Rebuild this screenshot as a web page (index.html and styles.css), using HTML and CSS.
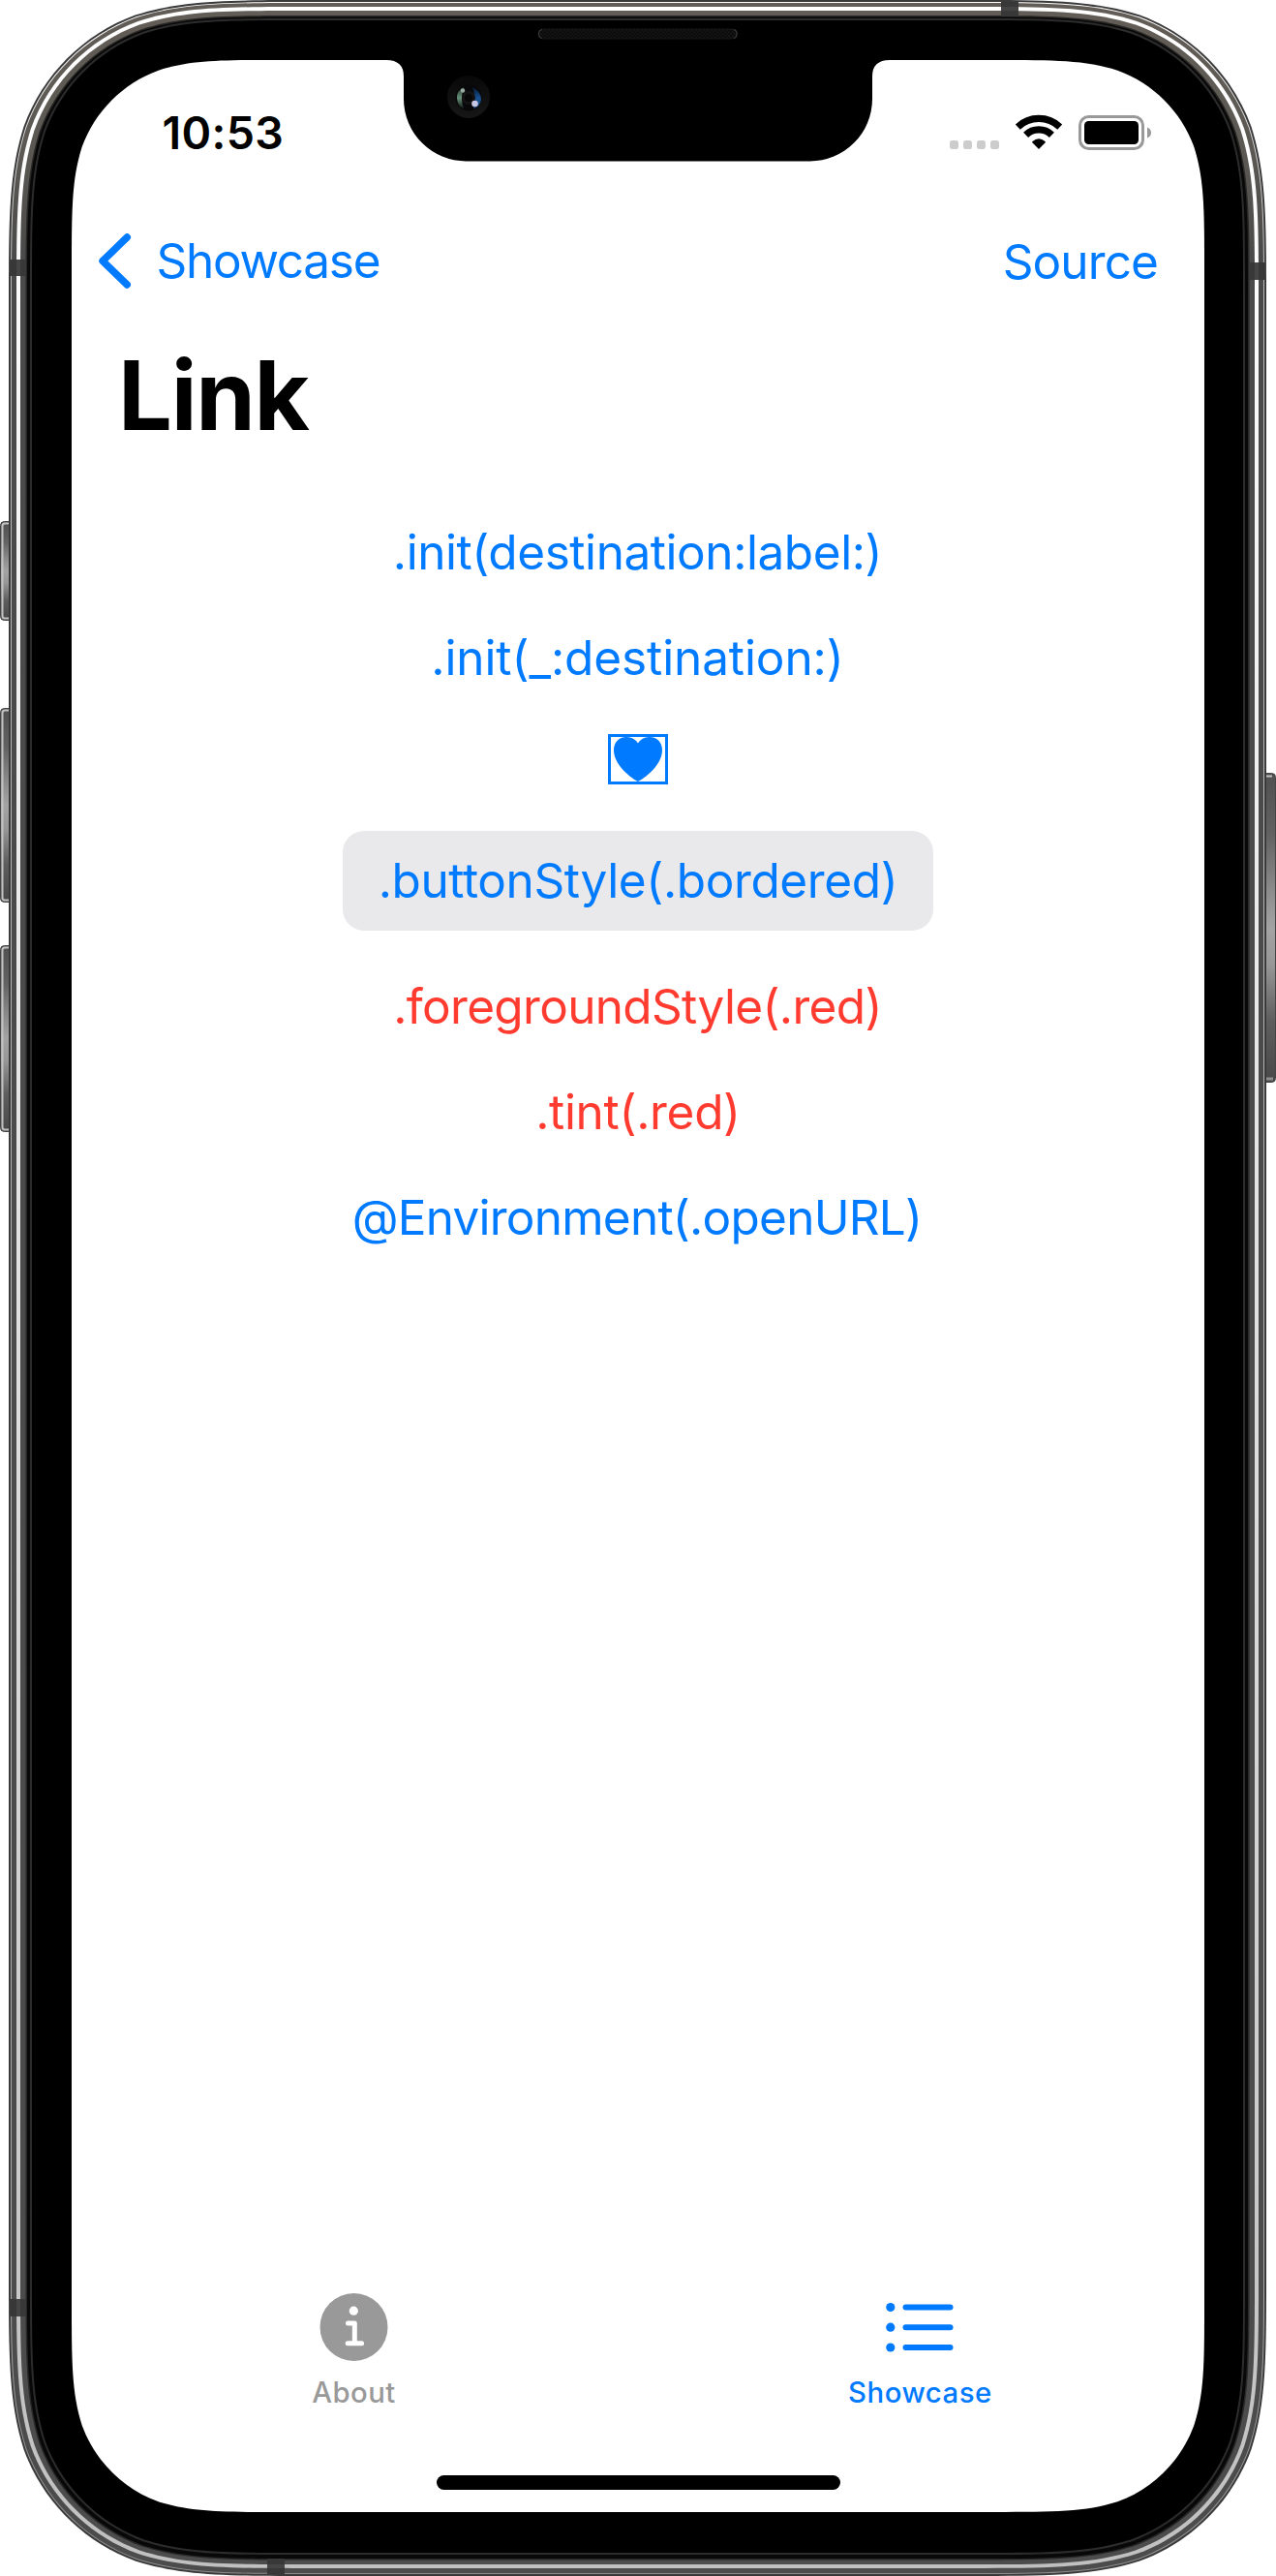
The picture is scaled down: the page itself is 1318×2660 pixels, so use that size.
FILE: index.html
```html
<!DOCTYPE html>
<html lang="en">
<head>
<meta charset="utf-8">
<title>Link</title>
<link rel="stylesheet" href="styles.css">
</head>
<body>
<div class="phone">
  <svg class="frame" viewBox="0 0 1318 2660" aria-hidden="true">
    <defs>
      <linearGradient id="steel" gradientUnits="userSpaceOnUse" x1="0" y1="0" x2="0" y2="2660">
        <stop offset="0" stop-color="#625d56"/><stop offset=".06" stop-color="#5b5853"/><stop offset=".1" stop-color="#4a4a4a"/><stop offset="1" stop-color="#4c4c4c"/>
      </linearGradient>
      <linearGradient id="shine" gradientUnits="userSpaceOnUse" x1="0" y1="0" x2="0" y2="2660">
        <stop offset="0" stop-color="#fff"/><stop offset=".12" stop-color="#fafafa"/><stop offset="1" stop-color="#c0c0c0"/>
      </linearGradient>
      <linearGradient id="edge" gradientUnits="userSpaceOnUse" x1="0" y1="0" x2="0" y2="2660">
        <stop offset="0" stop-color="#fff"/><stop offset=".1" stop-color="#bcbcbc"/><stop offset=".9" stop-color="#a8a8a8"/><stop offset="1" stop-color="#8c8c8c"/>
      </linearGradient>
      <linearGradient id="key" x1="0" y1="0" x2="0" y2="1">
        <stop offset="0" stop-color="#505050"/><stop offset=".2" stop-color="#626262"/><stop offset=".38" stop-color="#8c8c8c"/><stop offset=".5" stop-color="#a3a3a3"/><stop offset=".62" stop-color="#979797"/><stop offset=".8" stop-color="#5e5e5e"/><stop offset="1" stop-color="#484848"/>
      </linearGradient>
      <linearGradient id="lensRing" x1="0" y1="0" x2="0" y2="1">
        <stop offset="0" stop-color="#080808"/><stop offset="1" stop-color="#171717"/>
      </linearGradient>
      <linearGradient id="lensGreen" x1="0" y1="0" x2="0" y2="1">
        <stop offset="0" stop-color="#26352d"/><stop offset=".5" stop-color="#679079"/><stop offset="1" stop-color="#111a15"/>
      </linearGradient>
      <linearGradient id="lensBlue" x1="0" y1="0" x2="0" y2="1">
        <stop offset="0" stop-color="#06162c"/><stop offset=".5" stop-color="#17508f"/><stop offset="1" stop-color="#1c4a82"/>
      </linearGradient>
      <pattern id="mesh" width="4" height="4" patternUnits="userSpaceOnUse">
        <rect width="4" height="4" fill="#0c0c0c"/><rect width="2" height="2" fill="#131313"/><rect x="2" y="2" width="2" height="2" fill="#131313"/>
      </pattern>
    </defs>

    <g class="keys">
      <rect x=".5" y="538.5" width="16" height="102" rx="4" fill="url(#key)" stroke="#454545"/>
      <path d="M9 540.5H5Q2.5 540.5 2.5 543V636Q2.5 638.5 5 638.5H9" fill="none" stroke="#c4c2c2" stroke-width="2"/>
      <rect x=".5" y="731.5" width="16" height="200" rx="4" fill="url(#key)" stroke="#454545"/>
      <path d="M9 733.5H5Q2.5 733.5 2.5 736V927Q2.5 929.5 5 929.5H9" fill="none" stroke="#c4c2c2" stroke-width="2"/>
      <rect x=".5" y="976.5" width="16" height="192" rx="4" fill="url(#key)" stroke="#454545"/>
      <path d="M9 978.5H5Q2.5 978.5 2.5 981V1164Q2.5 1166.5 5 1166.5H9" fill="none" stroke="#c4c2c2" stroke-width="2"/>
      <rect x="1300" y="798.5" width="17.500" height="319" rx="4" fill="url(#key)" stroke="#454545"/>
      <path d="M1308 801.500H1314" stroke="#c4c2c2" stroke-width="2"/>
      <path d="M1308 1114H1315" stroke="#8e8e8e" stroke-width="3"/>
    </g>

    <g id="shell"></g>

    <g fill="#454545">
      <path fill="#383838" d="M10 268h17v17H10zM10 2374h17v18H10zM1290 271h16v18h-16zM1034 2h18v15h-18zM276 2642h18v16h-18z"/>
      <path d="M17 268h4v17h-4zM17 2374h4v18h-4zM1296 271h4v18h-4zM1034 7h18v4h-18zM276 2648h18v4h-18z"/>
    </g>

    <path d="M399 61H919V62Q901 62 901 79V102A64.500 64.500 0 0 1 836.500 166.500H481.500A64.500 64.500 0 0 1 417 102V79Q417 62 399 62Z"/>
    <rect x="556" y="30" width="205.500" height="10" rx="5" fill="url(#mesh)" stroke="#161616"/>
    <path d="M560 30.500Q556.500 31 556.500 35T560 39.500M757.500 30.500Q761 31 761 35T757.500 39.500" fill="none" stroke="#383838" stroke-width="1.200"/>
    <circle cx="484" cy="100" r="22" fill="url(#lensRing)"/>
    <circle cx="484" cy="101" r="13.500" fill="#08080a"/>
    <path d="M479 90Q471 94 472 102T479 112Q475 102 479 90Z" fill="url(#lensGreen)"/>
    <path d="M488 90Q497 94 497 103Q496 110 489 112Q492 100 488 90Z" fill="url(#lensBlue)"/>
    <circle cx="484" cy="101" r="7" fill="#151214"/><circle cx="484" cy="101" r="4" fill="#080707"/>
    <circle cx="478" cy="93.500" r="2.200" fill="#98aca1"/>
    <circle cx="490.500" cy="107" r="3.300" fill="#c8c8e6"/>
  </svg>

  <main class="screen">
    <header class="status">
      <span class="time">10:53</span>
      <div class="indicators">
        <svg width="51" height="37" viewBox="0 0 51 37" fill="#ccc"><rect y="27" width="9" height="9" rx="2.800"/><rect x="14" y="27" width="9" height="9" rx="2.800"/><rect x="28" y="27" width="9" height="9" rx="2.800"/><rect x="42" y="27" width="9" height="9" rx="2.800"/></svg>
        <svg width="48" height="37" viewBox="0 0 48 37">
          <path d="M24 36 17.300 29.300Q16.700 28.500 17.500 27.900Q24 22.800 30.500 27.900Q31.300 28.500 30.700 29.300Z"/>
          <path d="M10.600 21.400A19.200 19.200 0 0 1 37.400 21.400M2.300 13.100A31.500 31.500 0 0 1 45.700 13.100" fill="none" stroke="#000" stroke-width="7.200"/>
        </svg>
        <svg width="75" height="37" viewBox="0 0 75 37"><rect x="1.500" y="2.500" width="65" height="33" rx="9" fill="none" stroke="#999" stroke-width="3"/><rect x="6" y="7" width="56" height="24" rx="4.500"/><path d="M71 13.500Q75 15 75 19T71 24.500Z" fill="#999"/></svg>
      </div>
    </header>

    <nav class="navbar">
      <a class="back" href="#showcase">
        <svg width="35" height="57" viewBox="0 0 35 57" fill="none" stroke="#007aff" stroke-width="7.400" stroke-linecap="round" stroke-linejoin="round"><path d="M30.300 4 5 28.500 30.300 53"/></svg>
        <span>Showcase</span>
      </a>
      <a class="source" href="#source">Source</a>
    </nav>

    <h1 class="title">Link</h1>

    <section class="links">
      <a class="l-label" href="#">.init(destination:label:)</a>
      <a class="l-plain" href="#">.init(_:destination:)</a>
      <a class="heart" href="#" aria-label="Heart"><svg width="50" height="46" viewBox="0 0 50 46"><path d="M25 46C23.800 46 0 31.500 0 13.800C0 5.700 5.300 0 13 0C18.500 0 22.600 2.700 25 6.600C27.400 2.700 31.500 0 37 0C44.700 0 50 5.700 50 13.800C50 31.500 26.200 46 25 46Z" fill="#007aff"/></svg></a>
      <a class="bordered" href="#">.buttonStyle(.bordered)</a>
      <a class="red l-fg" href="#">.foregroundStyle(.red)</a>
      <a class="red l-tint" href="#">.tint(.red)</a>
      <a class="l-env" href="#">@Environment(.openURL)</a>
    </section>

    <footer class="tabs">
      <a class="tab tab-about" href="#about">
        <svg width="70" height="70" viewBox="0 0 70 70"><circle cx="34.500" cy="35" r="35" fill="#999"/><circle cx="34.300" cy="18.200" r="4.600" fill="#fff"/><path d="M28.500 31H35.300V51.700M28.200 51.700H42.600" fill="none" stroke="#fff" stroke-width="5" stroke-linecap="round" stroke-linejoin="round"/></svg>
        <span>About</span>
      </a>
      <a class="tab tab-showcase" href="#showcase">
        <svg width="70" height="70" viewBox="0 0 70 70" fill="#007aff"><circle cx="3.800" cy="14.500" r="4.600"/><circle cx="3.800" cy="35.200" r="4.600"/><circle cx="3.800" cy="56" r="4.600"/><rect x="16.500" y="11.500" width="52" height="6" rx="3"/><rect x="16.500" y="32.200" width="52" height="6" rx="3"/><rect x="16.500" y="53" width="52" height="6" rx="3"/></svg>
        <span>Showcase</span>
      </a>
    </footer>
    <div class="home"></div>
  </main>
</div>
<script src="shell.js"></script>
</body>
</html>
```
FILE: styles.css
```css
body {
  margin: 0;
  background: #fff;
  font-family: Inter, "Liberation Sans", sans-serif;
}
a { color: #007aff; text-decoration: none; }
svg { display: block; overflow: visible; flex: none; }

.phone {
  position: relative;
  box-sizing: border-box;
  width: 1318px;
  height: 2660px;
  padding: 62px 74px 66px;
  overflow: hidden;
}
.frame { position: absolute; inset: 0; width: 1318px; height: 2660px; }

.screen {
  position: relative;
  display: flex;
  flex-direction: column;
  height: 2532px;
}

.status {
  box-sizing: border-box;
  display: flex;
  justify-content: space-between;
  align-items: flex-start;
  height: 141px;
  padding: 47px 55px 0 93.5px;
}
.time { font-size: 46.5px; line-height: 57px; font-weight: 600; letter-spacing: .35px; }
.indicators { display: flex; align-items: center; gap: 17px; height: 55px; }

.navbar {
  display: flex;
  justify-content: space-between;
  align-items: center;
  height: 133px;
  padding: 0 48px 0 27px;
  font-size: 49.5px;
  line-height: 61px;
}
.back { display: flex; align-items: center; gap: 25.5px; letter-spacing: -1.27px; }
.source { margin-top: 2px; letter-spacing: -.9px; }

.title {
  margin: 12px 0 72px;
  padding-left: 48px;
  font-size: 99px;
  line-height: 120px;
  font-weight: 700;
  letter-spacing: -1.3px;
}

.links {
  display: flex;
  flex-direction: column;
  align-items: center;
  gap: 48px;
  font-size: 49.5px;
  line-height: 61px;
}
.l-label { letter-spacing: -.44px; padding-right: 1px; }
.l-plain { letter-spacing: -.1px; padding-right: 1px; }
.l-fg { letter-spacing: -.67px; padding-right: 1px; }
.l-tint { letter-spacing: -.32px; }
.l-env { letter-spacing: -.76px; padding-right: 2px; }
.red { color: #ff3b30; }
.heart {
  box-sizing: border-box;
  width: 62px;
  height: 52px;
  border: 3px solid #007aff;
  padding: 0 3px;
}
.bordered {
  box-sizing: border-box;
  width: 610px;
  height: 103px;
  border-radius: 22px;
  background: #e9e9eb;
  text-align: center;
  line-height: 103px;
  letter-spacing: -.39px;
}

.tabs {
  display: grid;
  grid-template-columns: 1fr 1fr;
  margin-top: auto;
  margin-bottom: 67px;
}
.tab {
  display: flex;
  flex-direction: column;
  align-items: center;
  gap: 15px;
  padding-right: 2px;
  font-size: 29.3px;
  line-height: 36px;
  font-weight: 500;
}
.tab-about { color: #999; letter-spacing: .45px; }
.tab-showcase { letter-spacing: .55px; }

.home {
  align-self: center;
  width: 417px;
  height: 15px;
  margin-bottom: 23px;
  border-radius: 8px;
  background: #000;
}
```
FILE: shell.js
```js
// Nested layers of the phone body, outermost first: left, top, right, bottom, fill.
const layers = [
  [9, 0, 1308, 2660, '#3a3a3a'],
  [11, 2, 1306, 2658, 'url(#edge)'],
  [12, 3, 1305, 2657, 'url(#steel)'],
  [17, 7, 1300, 2652, 'url(#shine)'],
  [21, 11, 1296, 2648, 'url(#steel)'],
  [26.5, 16, 1290.5, 2643.5, '#282725'],
  [28, 17.5, 1289, 2642, '#080808'],
  [31, 19, 1286, 2638, '#2c2c2c'],
  [33, 21, 1284, 2636, '#000'],
  [74, 62, 1244, 2594, '#fff']
];

// Rounded rectangle with continuous-curvature corners.
function smoothRect(x0, y0, x1, y1, r) {
  const corner = [
    [1.528665, 0], [1.088493, 0], [0.868407, 0], [0.631494, 0.074911],
    [0.372824, 0.16906], [0.16906, 0.372824], [0.074911, 0.631494],
    [0, 0.868407], [0, 1.088493], [0, 1.528665]
  ];
  const place = (pts, fx, fy) => pts.map(([a, b]) => [
    fx ? x1 - a * r : x0 + a * r,
    fy ? y1 - b * r : y0 + b * r
  ].map(n => n.toFixed(2)).join(' '));
  const back = [...corner].reverse();
  return [
    place(back, false, false), place(corner, true, false),
    place(back, true, true), place(corner, false, true)
  ].map((p, i) => (i ? 'L' : 'M') + p[0] + 'C' + p.slice(1).join(' ')).join('') + 'Z';
}

const shell = document.getElementById('shell');
for (const [x0, y0, x1, y1, fill] of layers) {
  const path = document.createElementNS('http://www.w3.org/2000/svg', 'path');
  path.setAttribute('d', smoothRect(x0, y0, x1, y1, 142 + 74 - x0));
  path.setAttribute('fill', fill);
  shell.appendChild(path);
}
```
